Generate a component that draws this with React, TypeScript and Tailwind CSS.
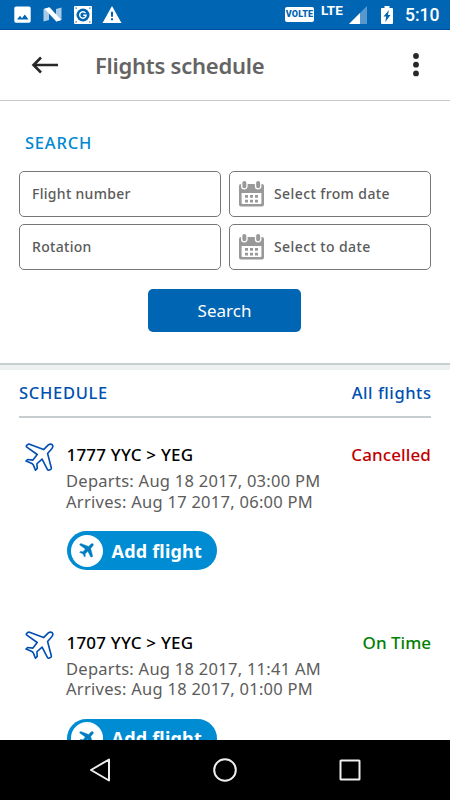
import React from 'react';

interface Flight {
  route: string;
  departs: string;
  arrives: string;
  status: string;
  statusClass: string;
}

const flights: Flight[] = [
  {
    route: '1777 YYC > YEG',
    departs: 'Aug 18 2017, 03:00 PM',
    arrives: 'Aug 17 2017, 06:00 PM',
    status: 'Cancelled',
    statusClass: 'text-[#c00000] tracking-[0.1px]',
  },
  {
    route: '1707 YYC > YEG',
    departs: 'Aug 18 2017, 11:41 AM',
    arrives: 'Aug 18 2017, 01:00 PM',
    status: 'On Time',
    statusClass: 'text-[#008000]',
  },
];

const PLANE_PATH =
  'M18.3 6.5 4.4 1.2Q3.4.8 2.6 1.5L1.5 2.6Q.9 3.4 1.8 4L12 11.3 7.8 16.8 2.6 16.2 1 17.8 6.8 20.2Q8.2 21.1 8.6 22.5L10.3 26.8 12 25 11.7 20.4 16.8 15.8 22 25.9Q22.6 27.1 23.8 26.6L25.1 26Q26.1 25.5 25.9 24.5L22.2 10.3 26.5 5.4Q28 3.5 26.9 1.8 25.1.2 22.9 1.9Z';

const PlaneIcon: React.FC<{ className: string; filled?: boolean }> = ({ className, filled }) => (
  <svg
    viewBox="0 0 28.5 28.5"
    className={className}
    fill={filled ? 'currentColor' : 'none'}
    stroke="currentColor"
    strokeWidth={filled ? 0.8 : 1.6}
    strokeLinejoin="round"
  >
    <path d={PLANE_PATH} />
  </svg>
);

const CalendarIcon: React.FC = () => (
  <svg width="25" height="27" viewBox="0 0 25 27" className="mb-[1px] shrink-0">
    <path fill="#999" fillRule="evenodd" d="M2 4h21q2 0 2 2v18.500q0 2-2 2H2q-2 0-2-2V6q0-2 2-2Zm.6 9v10q0 1 1 1h17.8q1 0 1-1V13Z" />
    <rect x="2.700" y="0.300" width="5.300" height="8.500" rx="2.600" fill="#999" stroke="#fff" strokeWidth="1.300" />
    <rect x="16.500" y="0.300" width="5.300" height="8.500" rx="2.600" fill="#999" stroke="#fff" strokeWidth="1.300" />
    <path fill="#999" d="M6 15h3v2.800H6zm5 0h3v2.800h-3zm5 0h3v2.800h-3zM6 19.800h3v2.800H6zm5 0h3v2.800h-3zm5 0h3v2.800h-3z" />
  </svg>
);

const StatusBar: React.FC = () => (
  <div className="flex h-[30px] items-center justify-between border-b border-[#004c9f] bg-[#0065b3] pl-[14px] pr-[10px] text-white">
    <div className="flex items-center gap-[12px]">
      <svg width="17" height="17" viewBox="0 0 17 17">
        <path fill="#fff" fillRule="evenodd" d="M2 .5h13q1.700 0 1.700 1.700V15q0 1.700-1.700 1.700H2Q.3 16.700.3 15V2.200Q.3.5 2 .5ZM3 13.500h11.500l-3.700-5-2.800 3.700-2-2.500Z" />
      </svg>
      <svg width="19" height="15" viewBox="0 0 19 15">
        <path fill="#a9cbe7" d="M.5 2 6 .5v12.500L.5 14.500ZM13 2l5.500-1.500V13L13 14.500Z" />
        <path fill="#fff" d="M1.500 1.800 6.500.3 18.300 13l-5 1.500Z" />
      </svg>
      <svg width="18" height="18" viewBox="0 0 18 18">
        <rect width="18" height="18" rx="1" fill="#fff" />
        <path fill="#0065b3" d="M1.500 1.500h1.200v1.200H1.500zm13.800 0h1.200v1.200h-1.200zM1.500 15.300h1.200v1.200H1.500zm13.800 0h1.200v1.200h-1.200z" />
        <circle cx="9" cy="9" r="6.500" fill="#0065b3" />
        <path fill="none" stroke="#fff" strokeWidth="1.400" d="M11.500 7.100A3.200 3.200 0 1 0 12.100 9.300H9.300" />
      </svg>
      <svg width="20" height="17" viewBox="0 0 20 17" className="-ml-[2px]">
        <path fill="#fff" d="M10 0 19.500 17H.5Z" />
        <path fill="#0065b3" d="M9 5.700h2v5H9zm0 6.500h2v2H9z" />
      </svg>
    </div>
    <div className="flex items-center">
      <span className="flex h-[15px] w-[29px] items-center justify-center rounded-[2px] bg-white font-['Roboto'] text-[9px] font-black tracking-[0.1px] text-[#0065b3]">
        VOLTE
      </span>
      <span className="mb-[7px] ml-[7px] w-[23px] font-['Roboto'] text-[13.5px] font-bold leading-none">LTE</span>
      <svg width="18" height="18" viewBox="0 0 18 18" className="ml-[5px]">
        <path fill="#5698cd" d="M18 0v18H0Z" />
        <path fill="#fff" d="M11 7v11H0Z" />
      </svg>
      <svg width="12" height="18" viewBox="0 0 12 18" className="ml-[14px]">
        <path fill="#fff" d="M3.500 0h5v2H11q1 0 1 1v14q0 1-1 1H1q-1 0-1-1V3q0-1 1-1h2.500Z" />
        <path fill="#0065b3" d="M8 4 2.500 10.500h2.700L4.300 16 9.500 9H6.800Z" />
      </svg>
      <span className="ml-[12px] mt-[2px] w-[35px] whitespace-nowrap font-['Roboto'] text-[17.5px] font-medium leading-none">5:10</span>
    </div>
  </div>
);

const AppHeader: React.FC = () => (
  <header className="flex h-[71px] items-center border-b border-[#c8c8c8] px-[31px]">
    <svg width="28" height="18" viewBox="0 0 28 18" fill="none" stroke="#282828" strokeWidth="2.600">
      <path d="M27 9H2.500M10 1.500 2.500 9l7.500 7.500" />
    </svg>
    <h1 className="ml-[36px] flex-1 text-[22px] font-semibold leading-none tracking-[-0.25px] text-[#646464]">Flights schedule</h1>
    <svg width="6" height="24" viewBox="0 0 6 24" fill="#282828">
      <circle cx="3" cy="3" r="2.900" />
      <circle cx="3" cy="11.700" r="2.900" />
      <circle cx="3" cy="20.400" r="2.900" />
    </svg>
  </header>
);

const Field: React.FC<{ label: string; date?: boolean }> = ({ label, date }) => (
  <div className={`flex h-[46px] items-center rounded-[5px] border border-[#777] ${date ? 'pl-[9px]' : 'pl-[12px]'}`}>
    {date && <CalendarIcon />}
    <span className={`text-[14px] font-medium leading-none text-[#5a5a5a] ${date ? 'ml-[10px] tracking-[0.4px]' : 'tracking-[0.3px]'}`}>
      {label}
    </span>
  </div>
);

const SearchPanel: React.FC = () => (
  <section className="h-[262px] pl-[18px] pr-[19px] pt-[32px]">
    <h2 className="ml-[7px] h-[38px] text-[16.5px] font-medium leading-[20px] tracking-[0.8px] text-[#0088d1]">SEARCH</h2>
    <div className="ml-[1px] grid grid-cols-2 gap-x-[8px] gap-y-[7px]">
      <Field label="Flight number" />
      <Field label="Select from date" date />
      <Field label="Rotation" />
      <Field label="Select to date" date />
    </div>
    <button className="mx-auto mt-[19px] flex h-[43px] w-[153px] items-center justify-center rounded-[5px] bg-[#0065b3] text-[17px] leading-none text-white">
      Search
    </button>
  </section>
);

const FlightRow: React.FC<{ flight: Flight }> = ({ flight }) => (
  <div className="flex h-[187.5px] items-start">
    <PlaneIcon className="ml-[5.5px] mt-[1px] h-[29px] w-[29px] shrink-0 text-[#004fb3]" />
    <div className="ml-[13px] flex-1">
      <div className="flex h-[27px] items-start justify-between whitespace-nowrap text-[17px] font-medium leading-[25px]">
        <span className="tracking-[0.2px] text-black">{flight.route}</span>
        <span className={flight.statusClass}>{flight.status}</span>
      </div>
      <div className="-ml-[0.5px] whitespace-nowrap text-[16.5px] leading-[20.5px] tracking-[0.27px] text-[#5c5c5c]">
        <p className="mt-[2px]">Departs: {flight.departs}</p>
        <p>Arrives: {flight.arrives}</p>
      </div>
      <button className="mt-[19px] flex h-[39px] w-[150px] items-center rounded-full bg-[#008cd3] pl-[4px] text-white">
        <span className="flex h-8 w-8 items-center justify-center rounded-full bg-white">
          <PlaneIcon filled className="h-[15px] w-[15px] text-[#007cc0]" />
        </span>
        <span className="ml-[9px] whitespace-nowrap text-[18px] font-bold leading-none tracking-[0.2px]">Add flight</span>
      </button>
    </div>
  </div>
);

const NavBar: React.FC = () => (
  <nav className="flex h-[60px] shrink-0 items-center justify-between bg-black px-[89px]">
    <svg width="22" height="26" viewBox="0 0 22 26" fill="none" stroke="#eee" strokeWidth="2" strokeLinejoin="round">
      <path d="M20 2.500v21L2 13Z" />
    </svg>
    <svg width="26" height="26" viewBox="0 0 26 26" fill="none" stroke="#eee" strokeWidth="2">
      <circle cx="13" cy="13" r="10.800" />
    </svg>
    <svg width="22" height="22" viewBox="0 0 22 22" fill="none" stroke="#eee" strokeWidth="2">
      <rect x="1.500" y="1.500" width="19" height="19" rx="0.500" />
    </svg>
  </nav>
);

export default function App() {
  return (
    <div className="flex h-[800px] w-[450px] flex-col overflow-hidden bg-white font-['Noto_Sans',sans-serif]">
      <StatusBar />
      <AppHeader />
      <main className="min-h-0 flex-1 overflow-hidden">
        <SearchPanel />
        <div className="h-[7px] border-t-2 border-[#c9cfcf] bg-[#edf1f2]" />
        <section className="px-[19px]">
          <div className="flex h-[48px] items-center justify-between border-b-2 border-[#c8ced0] text-[16.5px] font-medium leading-none text-[#0050b0]">
            <h2 className="tracking-[0.7px]">SCHEDULE</h2>
            <a className="-mr-[0.5px] tracking-[0.55px]">All flights</a>
          </div>
          <div className="pt-[24px]">
            {flights.map((flight) => (
              <FlightRow key={flight.route} flight={flight} />
            ))}
          </div>
        </section>
      </main>
      <NavBar />
    </div>
  );
}
